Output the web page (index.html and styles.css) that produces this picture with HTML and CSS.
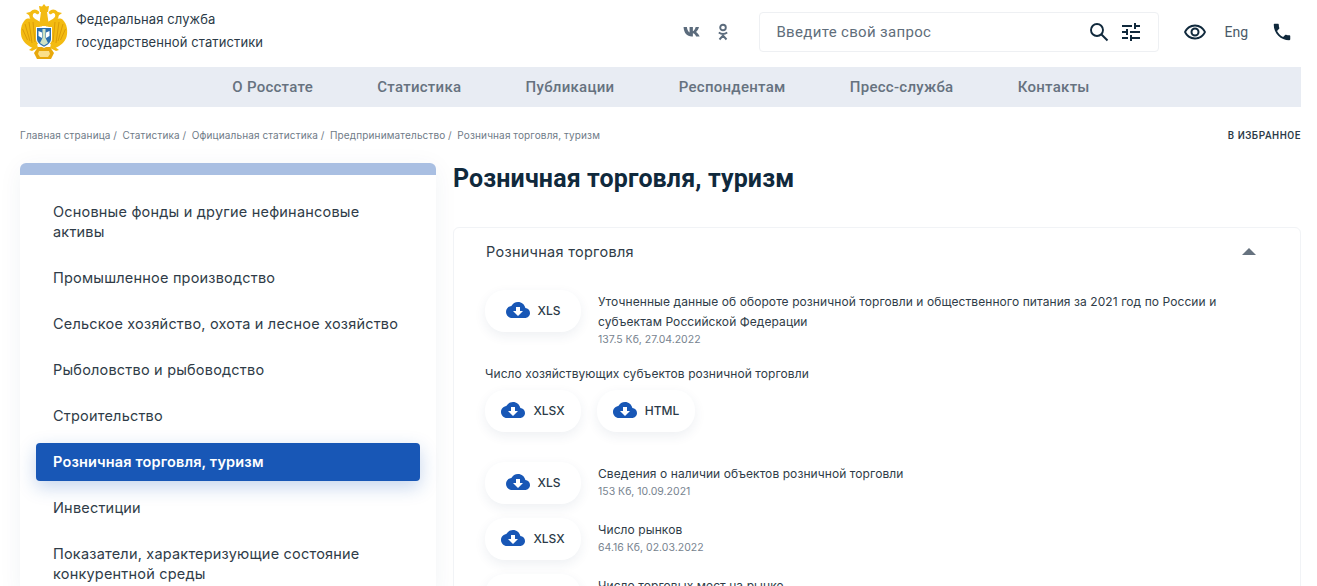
FILE: index.html
```html
<!DOCTYPE html>
<html lang="ru">
<head>
<meta charset="utf-8">
<title>Розничная торговля, туризм</title>
<link rel="stylesheet" href="styles.css">
</head>
<body>
<svg class="defs" width="0" height="0" aria-hidden="true">
  <symbol id="cloud" viewBox="0 0 24 24"><path d="M19.35 10.04C18.67 6.59 15.64 4 12 4 9.11 4 6.6 5.64 5.35 8.04 2.34 8.36 0 10.91 0 14c0 3.31 2.69 6 6 6h13c2.76 0 5-2.24 5-5 0-2.64-2.05-4.78-4.65-4.96zM17 13l-5 5-5-5h3V9h4v4h3z"/></symbol>
  <symbol id="half" viewBox="0 0 48 56">
    <path fill="#f3bb12" d="M20 19C14 15 8 13 5 16 1 20 0 27 1.500 33 3 38 8 42 13 44l6-5z"/>
    <path fill="none" stroke="#dc9c08" stroke-width="1" d="M5 20l5 17M2.500 25l5 11M9 18l3 21M13 18l2 20"/>
    <path fill="none" stroke="#f3bb12" stroke-width="3.400" stroke-linecap="round" d="M21 21C18 17 11 17 11 11.500 11 7.500 15 6 17.500 8.500"/>
    <path fill="#f3bb12" d="M10 8l-4 1 4 3 3-1z"/>
    <path fill="#f3bb12" d="M17 40l-8 6 3 1 6-3z"/>
  </symbol>
</svg>
<header class="top">
  <svg class="emblem" viewBox="0 0 48 56" aria-hidden="true">
    <use href="#half"/>
    <use href="#half" transform="matrix(-1 0 0 1 48 0)"/>
    <path fill="#f3bb12" d="M24 0l2 2.500 3-.5-1 6h-8l-1-6 3 .5z"/>
    <path fill="#f3bb12" d="M21 8h6l2 14H19z"/>
    <path fill="#e8a80b" d="M18 43h12l4 6-3 6H17l-3-6z"/>
    <path fill="#fbe08a" d="M19 47h10l1 3-2 3h-8l-2-3z"/>
    <path fill="#fff" d="M16 23h16v12c0 4-4 7-8 9-4-2-8-5-8-9z"/>
    <path fill="#2b6fae" d="M17 24h14v11c0 3.500-3.500 6-7 7.800-3.500-1.800-7-4.300-7-7.800z"/>
    <path fill="#cfe3c5" d="M22.500 25h3v9l2.500 5-4 2.500-4-2.500 2.500-5z"/>
    <path fill="#fff" d="M18.500 27l3.500 1.500V34l-3.500-2zM29.500 27L26 28.500V34l3.500-2z"/>
  </svg>
  <div class="org">Федеральная служба<br>государственной статистики</div>
  <div class="social">
    <svg class="vk" viewBox="0 0 18 18" aria-hidden="true"><path fill="#5b6b7c" d="M.5 4.500h3c.3 2.500 1.300 4.500 2.400 5V4.500h3v3.800c1-.2 2-2 2.500-3.800h3c-.4 2-1.700 3.500-2.600 4.400 1 .7 2.400 2 3.200 4.100h-3.200c-.6-1.600-1.800-2.700-2.900-2.900V13H8C3.500 13 .9 10 .5 4.500z"/></svg>
    <svg class="ok" viewBox="0 0 12 18" aria-hidden="true"><g fill="none" stroke="#5b6b7c" stroke-width="1.900"><circle cx="6" cy="4.500" r="2.800"/><path d="M1.800 9.500c2.500 1.700 5.900 1.700 8.400 0M6 11v1.500M2.500 16.500 6 12.500l3.500 4"/></g></svg>
  </div>
  <div class="search">
    <span class="search-text">Введите свой запрос</span>
    <svg class="search-ico" viewBox="0 0 20 20" aria-hidden="true"><g fill="none" stroke="#10293c" stroke-width="1.900"><circle cx="8" cy="8" r="6"/><path d="M12.500 12.500 18.500 18.500"/></g></svg>
    <svg class="tune-ico" viewBox="0 0 24 24" aria-hidden="true"><path fill="#10293c" d="M3 17v2h6v-2H3zM3 5v2h10V5H3zm10 16v-2h8v-2h-8v-2h-2v6h2zM7 9v2H3v2h4v2h2V9H7zm14 4v-2H11v2h10zm-6-4h2V7h4V5h-4V3h-2v6z"/></svg>
  </div>
  <svg class="eye" viewBox="0 0 24 24" aria-hidden="true"><path fill="#10293c" d="M12 4.500C7 4.500 2.730 7.610 1 12c1.730 4.390 6 7.500 11 7.500s9.270-3.110 11-7.500c-1.730-4.390-6-7.500-11-7.500zM12 17.500c-3.800 0-7.200-2.100-8.900-5.500C4.800 8.600 8.200 6.500 12 6.500s7.200 2.100 8.900 5.500c-1.700 3.400-5.100 5.500-8.900 5.500zm0-10a4.500 4.500 0 1 0 0 9 4.500 4.500 0 0 0 0-9zm0 7a2.500 2.500 0 1 1 0-5 2.500 2.500 0 0 1 0 5z"/></svg>
  <span class="lang">Eng</span>
  <svg class="phone" viewBox="0 0 24 24" aria-hidden="true"><path fill="#10293c" d="M6.620 10.790c1.440 2.830 3.760 5.140 6.590 6.590l2.200-2.200c.27-.27.67-.36 1.020-.24 1.120.37 2.330.57 3.570.57.55 0 1 .45 1 1V20c0 .55-.45 1-1 1-9.390 0-17-7.610-17-17 0-.55.45-1 1-1h3.500c.55 0 1 .45 1 1 0 1.250.2 2.450.57 3.570.11.35.03.74-.25 1.020l-2.200 2.200z"/></svg>
</header>

<nav class="menu">
  <a>О Росстате</a><a>Статистика</a><a>Публикации</a><a>Респондентам</a><a>Пресс-служба</a><a>Контакты</a>
</nav>

<div class="crumbs">
  <div class="crumb-list">Главная страница /&nbsp; Статистика /&nbsp; Официальная статистика /&nbsp; Предпринимательство /&nbsp; Розничная торговля, туризм</div>
  <div class="fav">В ИЗБРАННОЕ</div>
</div>

<div class="layout">
  <aside class="side">
    <div class="side-bar"></div>
    <ul class="side-list">
      <li>Основные фонды и другие нефинансовые активы</li>
      <li>Промышленное производство</li>
      <li>Сельское хозяйство, охота и лесное хозяйство</li>
      <li>Рыболовство и рыбоводство</li>
      <li>Строительство</li>
      <li class="active">Розничная торговля, туризм</li>
      <li>Инвестиции</li>
      <li>Показатели, характеризующие состояние конкурентной среды</li>
    </ul>
  </aside>
  <main class="main">
    <h1 class="title">Розничная торговля, туризм</h1>
    <section class="card">
      <div class="card-head">
        <span>Розничная торговля</span>
        <span class="caret"></span>
      </div>
      <div class="row row-first">
        <a class="dl"><svg class="cloud"><use href="#cloud"/></svg>XLS</a>
        <div class="info">
          <div class="name">Уточненные данные об обороте розничной торговли и общественного питания за 2021 год по России и субъектам Российской Федерации</div>
          <div class="meta">137.5 Кб, 27.04.2022</div>
        </div>
      </div>
      <div class="group-label">Число хозяйствующих субъектов розничной торговли</div>
      <div class="btns">
        <a class="dl"><svg class="cloud"><use href="#cloud"/></svg>XLSX</a>
        <a class="dl"><svg class="cloud"><use href="#cloud"/></svg>HTML</a>
      </div>
      <div class="row row-third">
        <a class="dl"><svg class="cloud"><use href="#cloud"/></svg>XLS</a>
        <div class="info">
          <div class="name">Сведения о наличии объектов розничной торговли</div>
          <div class="meta">153 Кб, 10.09.2021</div>
        </div>
      </div>
      <div class="row row-next">
        <a class="dl"><svg class="cloud"><use href="#cloud"/></svg>XLSX</a>
        <div class="info">
          <div class="name">Число рынков</div>
          <div class="meta">64.16 Кб, 02.03.2022</div>
        </div>
      </div>
      <div class="row row-next">
        <a class="dl"><svg class="cloud"><use href="#cloud"/></svg>XLSX</a>
        <div class="info">
          <div class="name">Число торговых мест на рынке</div>
        </div>
      </div>
    </section>
  </main>
</div>
</body>
</html>
```

FILE: styles.css
```css
* { box-sizing: border-box; }
html, body { margin: 0; padding: 0; height: 586px; overflow: hidden; background: #fff; }
body { font-family: Inter, "Noto Sans", sans-serif; color: #2b3a47; }
.defs { position: absolute; }

.top { display: flex; align-items: center; height: 67px; padding: 0 24px 4px 20px; }
.emblem { width: 48px; height: 56px; flex: none; }
.org { margin: 0 0 2px 8px; font-size: 13px; line-height: 23px; color: #2b3a47; letter-spacing: .1px; }
.social { display: flex; align-items: center; margin-left: auto; gap: 14px; }
.vk { width: 20px; height: 20px; }
.ok { width: 12px; height: 18px; }
.search { display: flex; align-items: center; width: 400px; height: 40px; margin-left: 30px; padding: 0 15px 0 16px; border: 1px solid #eef0f3; border-radius: 4px; }
.search-text { font-family: Roboto, sans-serif; font-size: 15px; color: #5f6e7b; letter-spacing: .33px; }
.search-ico { width: 20px; height: 20px; margin-left: auto; }
.tune-ico { width: 24px; height: 24px; margin-left: 10px; }
.eye { width: 24px; height: 24px; margin-left: 24px; }
.lang { margin-left: 17px; font-family: Roboto, sans-serif; font-size: 14px; color: #4a5a68; }
.phone { width: 22px; height: 22px; margin-left: 23px; }

.menu { display: flex; justify-content: center; gap: 64.300px; height: 40px; width: 1281px; margin-left: 20px; padding-left: 1px; align-items: center; background: #e8ecf3; }
.menu a { font-family: Roboto, sans-serif; font-weight: 500; font-size: 15px; letter-spacing: .27px; color: #66727f; }

.crumbs { display: flex; justify-content: space-between; align-items: center; width: 1281px; margin: 22px 0 0 20px; height: 12px; }
.crumb-list { font-size: 10px; letter-spacing: .15px; word-spacing: -.25px; color: #6f7b87; white-space: nowrap; }
.fav { font-family: Roboto, sans-serif; font-size: 10px; font-weight: 500; letter-spacing: .55px; color: #2b3a47; }

.layout { display: flex; align-items: flex-start; margin: 22px 0 0 20px; width: 1281px; }
.side { width: 416px; flex: none; box-shadow: 0 4px 24px rgba(40, 60, 100, .06); border-radius: 6px 6px 0 0; }
.side-bar { height: 12px; background: #a9bfe2; border-radius: 6px 6px 0 0; }
.side-list { list-style: none; margin: 0; padding: 18px 16px 0; display: flex; flex-direction: column; gap: 8px; }
.side-list li { padding: 9px 17px; font-size: 14.500px; line-height: 20px; color: #2f3c48; border-radius: 4px; letter-spacing: .2px; }
.side-list li.active { background: #1857b6; color: #fff; font-weight: 600; letter-spacing: .15px; box-shadow: 0 6px 18px rgba(24, 87, 182, .25); }

.main { margin-left: 17px; flex: 1; min-width: 0; }
.title { margin: 0; padding-top: 1px; font-family: Roboto, sans-serif; font-weight: 700; font-size: 25px; letter-spacing: .13px; line-height: 30px; color: #10293c; }
.card { margin-top: 33px; border: 1px solid #f1f3f6; border-radius: 6px 6px 0 0; padding: 0 32px 0 31px; height: 400px; }
.card-head { display: flex; justify-content: space-between; align-items: center; height: 47px; padding: 0 12px 0 1px; font-size: 14.500px; letter-spacing: .28px; color: #2f3c48; margin-bottom: 15px; }
.caret { width: 0; height: 0; border-left: 7px solid transparent; border-right: 7px solid transparent; border-bottom: 7px solid #66727f; }

.row { display: flex; align-items: flex-start; }
.row-third { margin-top: 30px; }
.row-next { margin-top: 14px; }
.dl { display: flex; align-items: center; justify-content: center; gap: 8px; width: 96px; height: 42px; padding-bottom: 2px; border-radius: 20px; background: #fff; box-shadow: 0 4px 12px rgba(40, 60, 100, .08); font-size: 12px; font-weight: 500; color: #2b3a47; flex: none; }
.btns { display: flex; gap: 16px; margin-top: 6px; }
.btns .dl + .dl { width: 98px; }
.cloud { width: 24px; height: 24px; fill: #1857b6; }
.info { margin-left: 17px; padding-top: 2px; }
.name { font-size: 12px; letter-spacing: .08px; line-height: 20px; color: #2f3c48; width: 640px; }
.meta { font-size: 10.500px; line-height: 15px; color: #77838f; }
.group-label { margin-top: 17px; font-size: 12px; letter-spacing: .08px; line-height: 20px; color: #2f3c48; }
```
